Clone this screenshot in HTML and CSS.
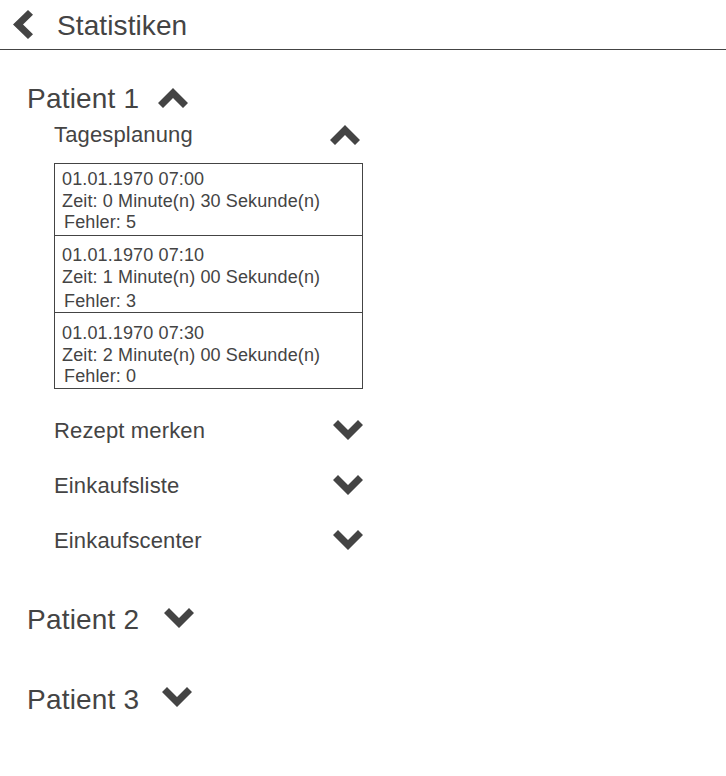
FILE: index.html
```html
<!DOCTYPE html>
<html lang="de">
<head>
<meta charset="utf-8">
<title>Statistiken</title>
<link rel="stylesheet" href="styles.css">
</head>
<body>
<header class="topbar">
  <svg class="back-icon" viewBox="0 0 20 30" preserveAspectRatio="none" aria-hidden="true"><polygon points="15,0 20,5 10,15 20,25 15,30 0,15"/></svg>
  <h1 class="title">Statistiken</h1>
</header>

<main class="patients">
  <section class="patient">
    <h2 class="patient-head">Patient 1
      <svg class="chev chev--head" viewBox="0 0 30 20" aria-hidden="true"><polygon points="0,15 5,20 15,10 25,20 30,15 15,0"/></svg>
    </h2>
    <div class="subs">
      <div class="sub">
        <div class="sub-head">Tagesplanung
          <svg class="chev chev--sub-up" viewBox="0 0 30 20" aria-hidden="true"><polygon points="0,15 5,20 15,10 25,20 30,15 15,0"/></svg>
        </div>
        <div class="entries">
          <div class="entry">
            <div class="line">01.01.1970 07:00</div>
            <div class="line">Zeit: 0 Minute(n) 30 Sekunde(n)</div>
            <div class="fehler">Fehler: 5</div>
          </div>
          <div class="entry entry--later">
            <div class="line">01.01.1970 07:10</div>
            <div class="line">Zeit: 1 Minute(n) 00 Sekunde(n)</div>
            <div class="fehler fehler--low">Fehler: 3</div>
          </div>
          <div class="entry entry--later entry--last">
            <div class="line">01.01.1970 07:30</div>
            <div class="line">Zeit: 2 Minute(n) 00 Sekunde(n)</div>
            <div class="fehler">Fehler: 0</div>
          </div>
        </div>
      </div>
      <div class="sub">
        <div class="sub-head">Rezept merken
          <svg class="chev chev--sub" viewBox="0 0 30 20" aria-hidden="true"><polygon points="0,5 5,0 15,10 25,0 30,5 15,20"/></svg>
        </div>
      </div>
      <div class="sub">
        <div class="sub-head">Einkaufsliste
          <svg class="chev chev--sub" viewBox="0 0 30 20" aria-hidden="true"><polygon points="0,5 5,0 15,10 25,0 30,5 15,20"/></svg>
        </div>
      </div>
      <div class="sub">
        <div class="sub-head">Einkaufscenter
          <svg class="chev chev--sub" viewBox="0 0 30 20" aria-hidden="true"><polygon points="0,5 5,0 15,10 25,0 30,5 15,20"/></svg>
        </div>
      </div>
    </div>
  </section>

  <section class="patient">
    <h2 class="patient-head">Patient 2
      <svg class="chev chev--head-down" viewBox="0 0 30 20" aria-hidden="true"><polygon points="0,5 5,0 15,10 25,0 30,5 15,20"/></svg>
    </h2>
  </section>

  <section class="patient">
    <h2 class="patient-head">Patient 3
      <svg class="chev chev--head-down chev--p3" viewBox="0 0 30 20" aria-hidden="true"><polygon points="0,5 5,0 15,10 25,0 30,5 15,20"/></svg>
    </h2>
  </section>
</main>
</body>
</html>
```

FILE: styles.css
```css
html, body {
  margin: 0;
  padding: 0;
  background: #ffffff;
}

body {
  font-family: "Liberation Sans", Arial, sans-serif;
  color: #444444;
}

.topbar {
  display: flex;
  align-items: center;
  height: 46px;
  padding: 3px 0 0 13px;
  border-bottom: 1px solid #444444;
}

.back-icon {
  width: 20px;
  height: 29px;
  fill: #444444;
  margin-top: -3px;
}

.title {
  margin: 0 0 0 24px;
  font-size: 28px;
  line-height: 32px;
  font-weight: normal;
  letter-spacing: 0.1px;
}

.patients {
  display: flex;
  flex-direction: column;
  gap: 48px;
  padding: 33px 0 0 27px;
}

.patient-head {
  display: flex;
  align-items: center;
  margin: 0;
  font-size: 28px;
  line-height: 32px;
  font-weight: normal;
  letter-spacing: 0.2px;
}

.chev {
  fill: #444444;
  flex: none;
  width: 30px;
  height: 20px;
}

.chev--head {
  margin-left: 19px;
  margin-top: -3px;
}

.chev--head-down {
  margin-left: 25px;
  margin-top: -5px;
}

.chev--p3 {
  margin-left: 23px;
  margin-top: -7px;
}

.subs {
  display: flex;
  flex-direction: column;
  gap: 29px;
  width: 309px;
  margin: 7px 0 2px 27px;
}

.sub-head {
  display: flex;
  align-items: center;
  justify-content: space-between;
  font-size: 22px;
  line-height: 26px;
  letter-spacing: 0.15px;
}

.chev--sub-up {
  margin-right: 3px;
  margin-top: -1px;
}

.chev--sub {
  margin-right: 0;
  margin-top: -3px;
}

.entries {
  margin-top: 15px;
  border: 1px solid #444444;
  font-size: 18px;
  line-height: 22px;
  letter-spacing: 0.13px;
}

.entry {
  padding: 4px 0 2px 7px;
}

.entry--later {
  padding-top: 8px;
  padding-bottom: 0;
  border-top: 1px solid #444444;
}

.entry--last {
  padding-top: 9px;
  padding-bottom: 1px;
}

.fehler {
  margin-left: 2px;
  line-height: 21px;
}

.fehler--low {
  margin-top: 3px;
}
```
